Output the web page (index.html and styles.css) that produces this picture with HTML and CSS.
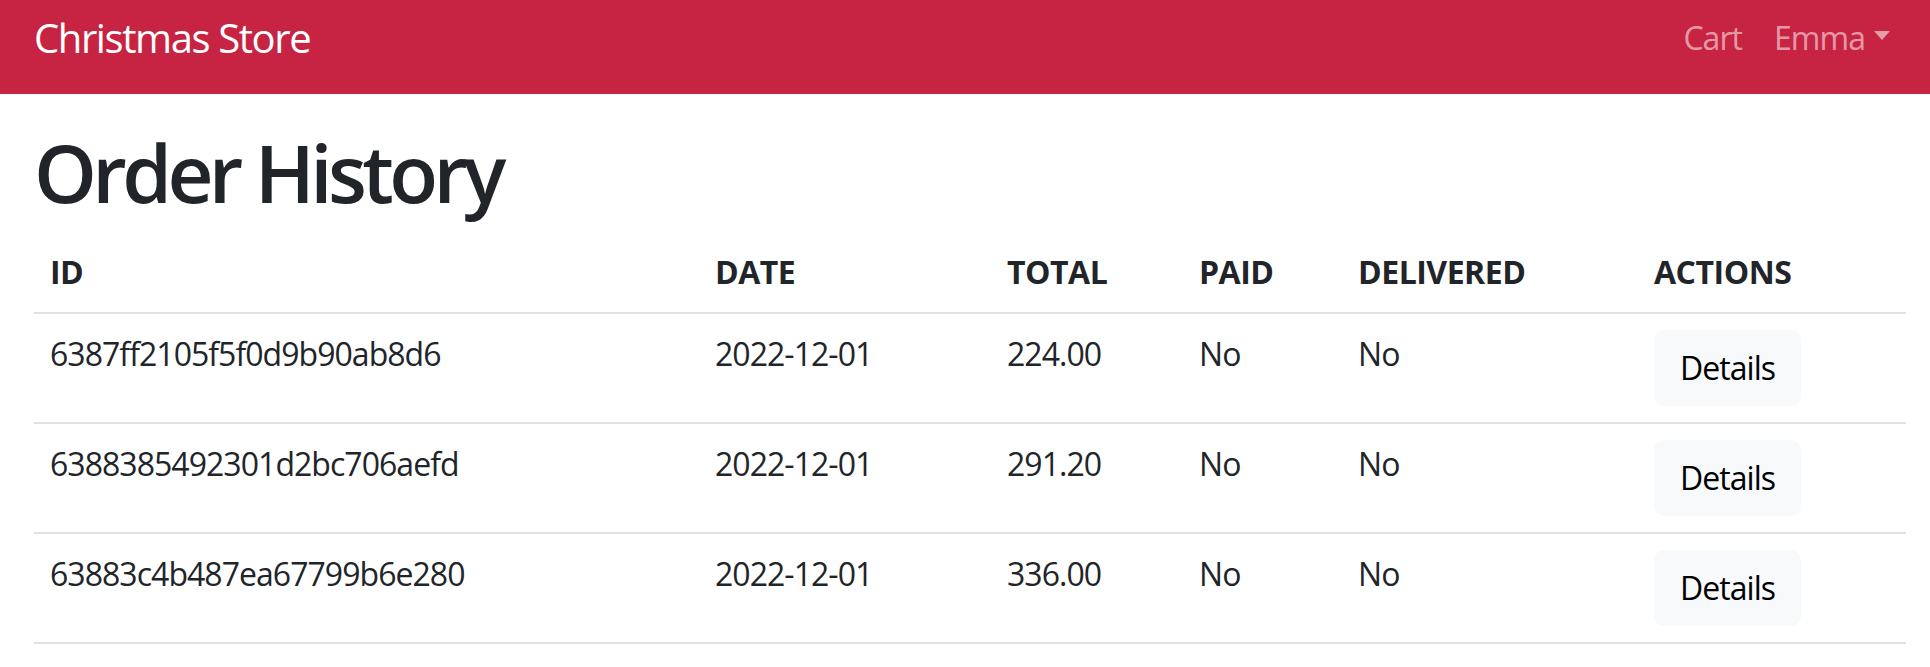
FILE: index.html
```html
<!DOCTYPE html>
<html lang="en">
<head>
<meta charset="utf-8">
<title>Order History - Christmas Store</title>
<link rel="stylesheet" href="styles.css">
</head>
<body>
<nav class="navbar">
  <a class="brand" href="#">Christmas Store</a>
  <ul class="nav">
    <li><a class="nav-link" href="#">Cart</a></li>
    <li><a class="nav-link dropdown-toggle" href="#">Emma</a></li>
  </ul>
</nav>
<main class="container">
  <h1 class="title">Order History</h1>
  <table class="orders">
    <colgroup>
      <col class="c-id"><col class="c-date"><col class="c-total"><col class="c-paid"><col class="c-deliv"><col class="c-act">
    </colgroup>
    <thead>
      <tr><th>ID</th><th>DATE</th><th>TOTAL</th><th>PAID</th><th>DELIVERED</th><th>ACTIONS</th></tr>
    </thead>
    <tbody>
      <tr><td>6387ff2105f5f0d9b90ab8d6</td><td>2022-12-01</td><td>224.00</td><td>No</td><td>No</td><td><button class="btn" type="button">Details</button></td></tr>
      <tr><td>6388385492301d2bc706aefd</td><td>2022-12-01</td><td>291.20</td><td>No</td><td>No</td><td><button class="btn" type="button">Details</button></td></tr>
      <tr><td>63883c4b487ea67799b6e280</td><td>2022-12-01</td><td>336.00</td><td>No</td><td>No</td><td><button class="btn" type="button">Details</button></td></tr>
    </tbody>
  </table>
</main>
</body>
</html>
```

FILE: styles.css
```css
* { box-sizing: border-box; }
html, body { margin: 0; padding: 0; }
body {
  font-family: "Open Sans", "Noto Sans", "Liberation Sans", sans-serif;
  font-size: 32px;
  line-height: 1.5;
  letter-spacing: -0.03em;
  color: #212529;
  background: #fff;
}
a { text-decoration: none; }

.navbar {
  height: 94px;
  background: #c62442;
  display: flex;
  align-items: center;
  justify-content: space-between;
  padding: 8px 24px 26px 34px;
}
.brand {
  color: #fff;
  font-size: 40px;
  line-height: 60px;
  letter-spacing: -0.035em;
}
.nav {
  list-style: none;
  margin: 0;
  padding: 0;
  display: flex;
}
.nav-link {
  display: flex;
  align-items: center;
  padding: 0 16px;
  color: rgba(255, 255, 255, 0.55);
  line-height: 48px;
}
.dropdown-toggle::after {
  content: "";
  display: inline-block;
  margin-left: 9px;
  border-top: 9px solid currentColor;
  border-left: 8.5px solid transparent;
  border-right: 8.5px solid transparent;
  position: relative;
  top: -3px;
}

.container {
  padding: 30px 24px 0 34px;
}
.title {
  margin: 0 0 12px;
  font-size: 80px;
  font-weight: 600;
  line-height: 96px;
  letter-spacing: -0.058em;
}

.orders {
  width: 1872px;
  border-collapse: collapse;
  table-layout: fixed;
}
.c-id { width: 665px; }
.c-date { width: 292px; }
.c-total { width: 192px; }
.c-paid { width: 159px; }
.c-deliv { width: 296px; }
.c-act { width: 268px; }

.orders th,
.orders td {
  padding: 16px;
  text-align: left;
  vertical-align: top;
  border-bottom: 2px solid #dee2e6;
  line-height: 48px;
}
.orders th {
  font-weight: 700;
  letter-spacing: -0.015em;
}

.btn {
  font: inherit;
  letter-spacing: inherit;
  line-height: 48px;
  color: #000;
  background: #f8f9fa;
  border: 2px solid #f8f9fa;
  border-radius: 10px;
  padding: 12px 24px;
  cursor: pointer;
}
```
